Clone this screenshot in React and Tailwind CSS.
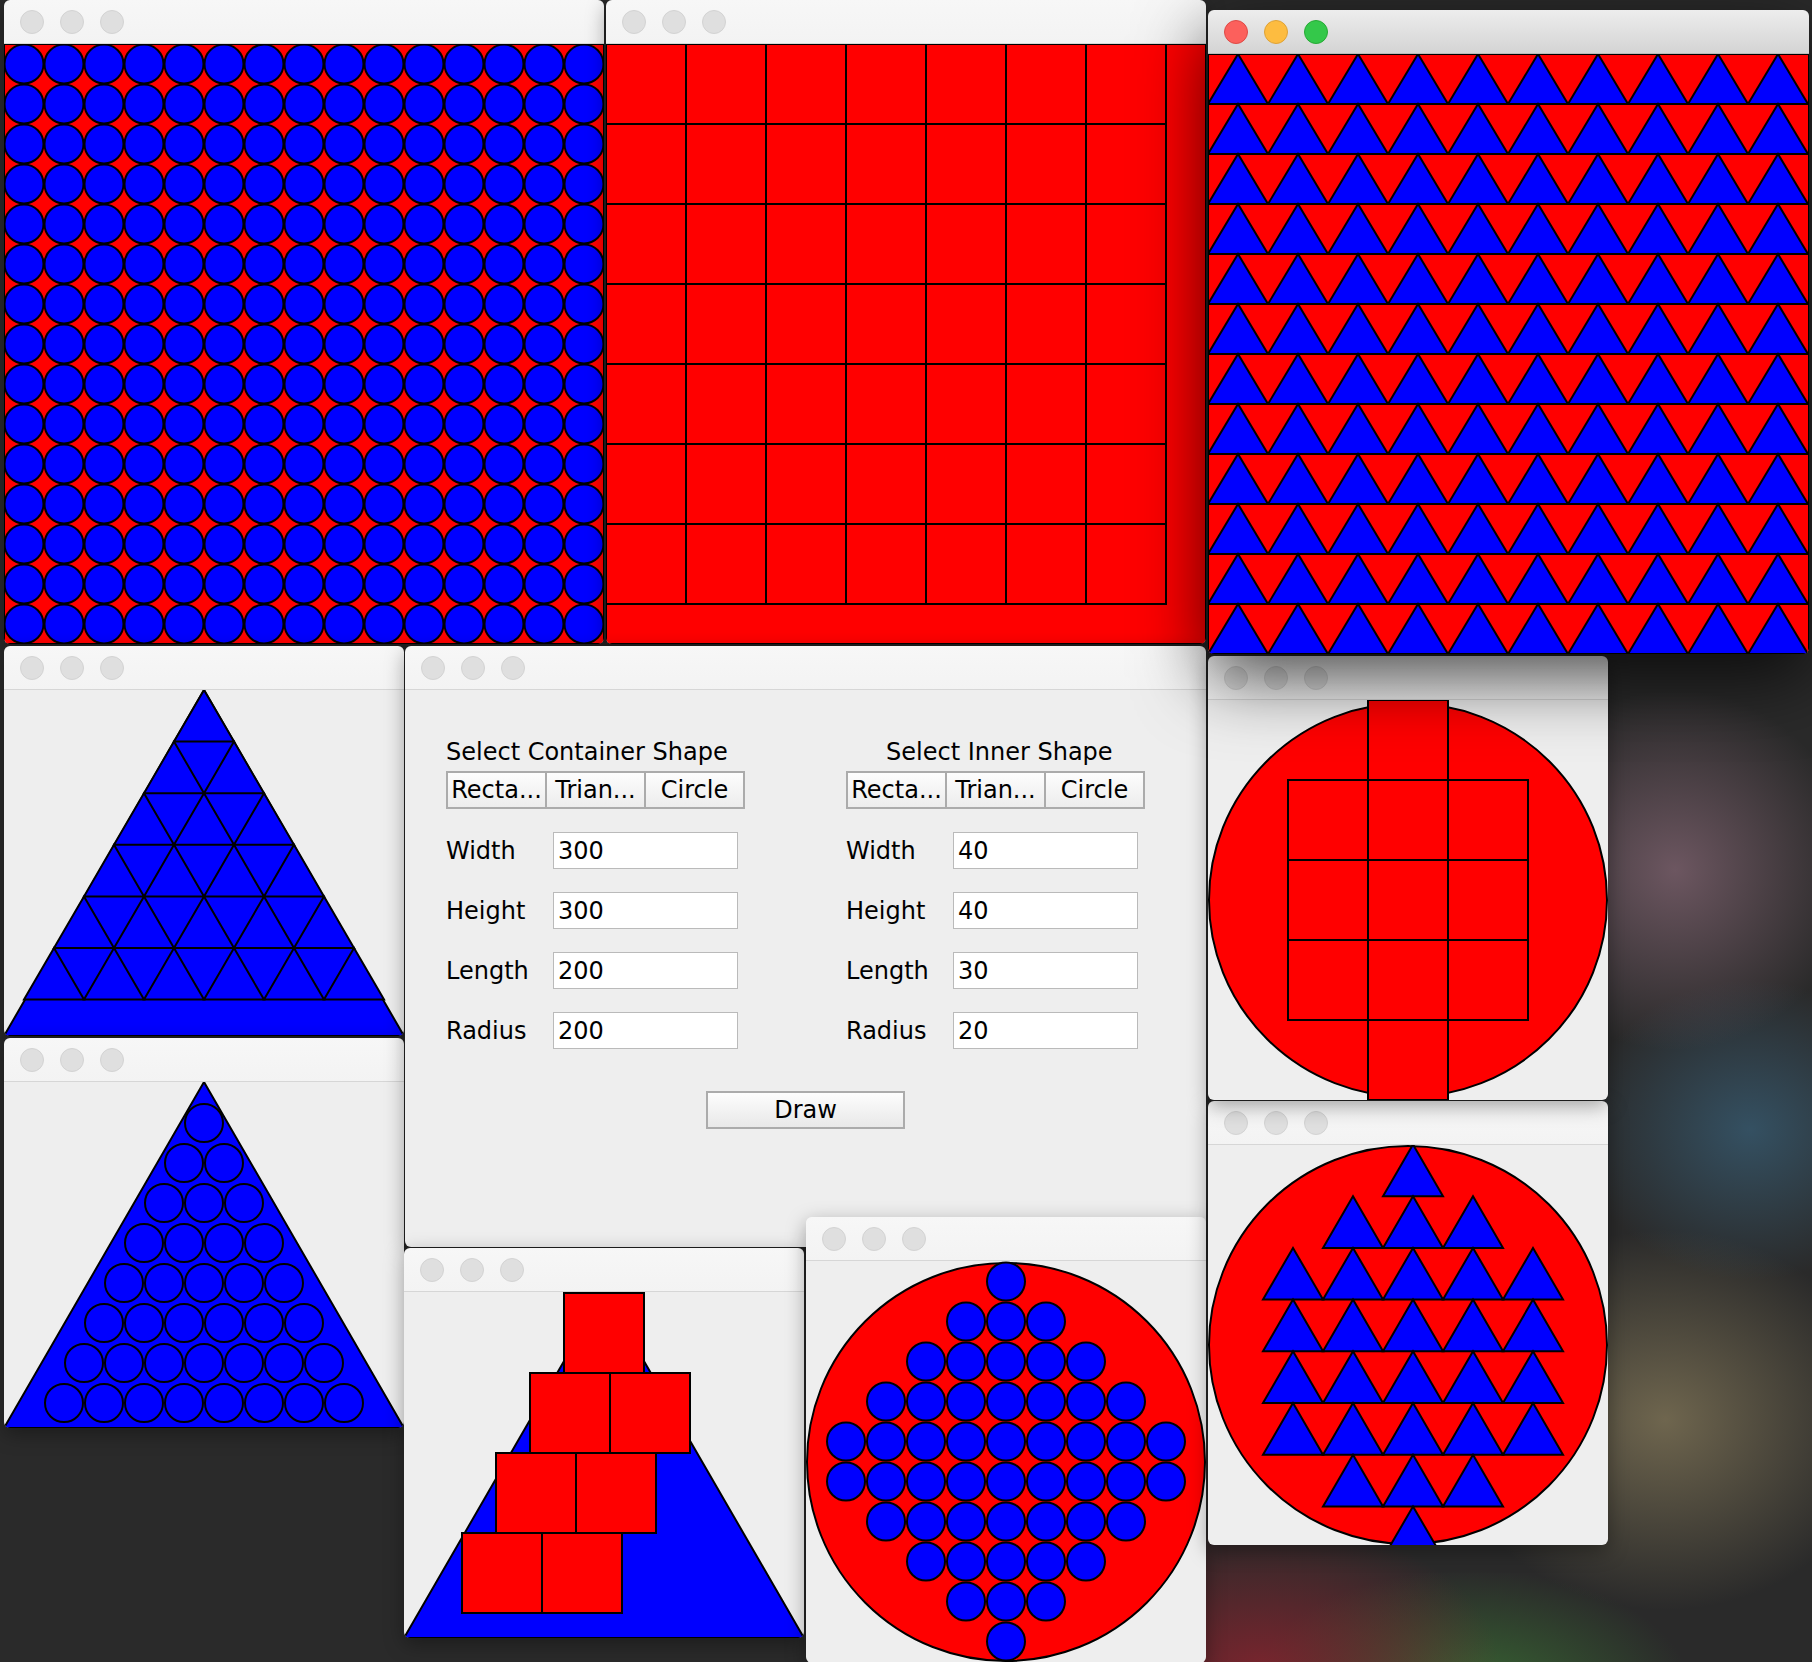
import React from 'react';

const RED = '#ff0000';
const BLUE = '#0000ff';

// traffic lights in the title bar
function Lights({ active }) {
    if (active) {
        return (
            <>
                <span className="h-[24px] w-[24px] rounded-full border border-[#de4a46] bg-[#fc605c]" />
                <span className="h-[24px] w-[24px] rounded-full border border-[#dea236] bg-[#fdbc40]" />
                <span className="h-[24px] w-[24px] rounded-full border border-[#27aa35] bg-[#34c84a]" />
            </>
        );
    }
    return (
        <>
            <span className="h-[24px] w-[24px] rounded-full border border-[#d3d3d3] bg-[#dfdfdf]" />
            <span className="h-[24px] w-[24px] rounded-full border border-[#d3d3d3] bg-[#dfdfdf]" />
            <span className="h-[24px] w-[24px] rounded-full border border-[#d3d3d3] bg-[#dfdfdf]" />
        </>
    );
}

function Window({ className, active, children }) {
    return (
        <div className={`absolute flex flex-col overflow-hidden rounded-[6px] ${active ? 'shadow-[0_24px_70px_rgba(0,0,0,0.7)]' : 'shadow-[0_6px_20px_rgba(0,0,0,0.35)]'} ${className}`}>
            <div className={`flex h-[44px] shrink-0 items-center gap-[16px] border-b pl-[16px] ${active ? 'border-[#b9b9b9] bg-gradient-to-b from-[#ededed] to-[#d4d4d4]' : 'border-[#d6d6d6] bg-gradient-to-b from-[#f7f7f7] to-[#f3f3f3]'}`}>
                <Lights active={active} />
            </div>
            <div className="flex-1 overflow-hidden bg-[#eeeeee]">{children}</div>
        </div>
    );
}

const stroke = { stroke: '#000', strokeWidth: 2 };

function CircleGrid() {
    const items = [];
    for (let i = 0; i < 15; i++)
        for (let j = 0; j < 15; j++)
            items.push(<circle key={`${i}-${j}`} cx={20 + 40 * j} cy={20 + 40 * i} r={19.5} fill={BLUE} {...stroke} />);
    return (
        <svg width="600" height="600" className="block">
            <rect x="0" y="0" width="600" height="600" fill={RED} {...stroke} />
            {items}
        </svg>
    );
}

function RectGrid() {
    const items = [];
    for (let i = 0; i < 7; i++)
        for (let j = 0; j < 7; j++)
            items.push(<rect key={`${i}-${j}`} x={80 * j} y={80 * i} width="80" height="80" fill={RED} {...stroke} />);
    return (
        <svg width="600" height="600" className="block" shapeRendering="crispEdges">
            <rect x="0" y="0" width="600" height="600" fill={RED} {...stroke} />
            {items}
        </svg>
    );
}

function TriangleGrid() {
    const items = [];
    for (let i = 0; i < 12; i++)
        for (let j = 0; j < 10; j++) {
            const x = 60 * j, y = 50 * i;
            items.push(<polygon key={`${i}-${j}`} points={`${x},${y + 50} ${x + 30},${y} ${x + 60},${y + 50}`} fill={BLUE} {...stroke} />);
        }
    return (
        <svg width="601" height="600" className="block">
            <rect x="0" y="0" width="601" height="600" fill={RED} {...stroke} />
            {items}
        </svg>
    );
}

const BIG_TRI = '0,346 200,0 400,346';

function TriInTri() {
    const h = 51.6;
    const items = [];
    for (let k = 0; k < 6; k++)
        for (let j = 0; j <= k; j++) {
            const left = 200 - 30 * (k + 1) + 60 * j;
            items.push(<polygon key={`${k}-${j}`} points={`${left},${h * (k + 1)} ${left + 30},${h * k} ${left + 60},${h * (k + 1)}`} fill={BLUE} {...stroke} />);
        }
    return (
        <svg width="400" height="346" className="block">
            <polygon points={BIG_TRI} fill={BLUE} {...stroke} />
            {items}
        </svg>
    );
}

function CircInTri() {
    const items = [];
    for (let i = 0; i < 8; i++)
        for (let j = 0; j <= i; j++)
            items.push(<circle key={`${i}-${j}`} cx={200 - 20 * i + 40 * j} cy={41 + 40 * i} r={19} fill={BLUE} {...stroke} />);
    return (
        <svg width="400" height="346" className="block">
            <polygon points={BIG_TRI} fill={BLUE} {...stroke} />
            {items}
        </svg>
    );
}

function RectInTri() {
    const rects = [[160, 1], [126, 81], [206, 81], [92, 161], [172, 161], [58, 241], [138, 241]];
    return (
        <svg width="400" height="346" className="block">
            <polygon points={BIG_TRI} fill={BLUE} {...stroke} />
            {rects.map(([x, y]) => (
                <rect key={`${x}-${y}`} x={x} y={y} width="80" height="80" fill={RED} {...stroke} shapeRendering="crispEdges" />
            ))}
        </svg>
    );
}

function CircInCirc() {
    const counts = [0, 1, 2, 3, 4, 4, 3, 2, 1, 0];
    const items = [];
    counts.forEach((n, i) => {
        for (let j = -n; j <= n; j++)
            items.push(<circle key={`${i}-${j}`} cx={200 + 40 * j} cy={20.5 + 40 * i} r={19} fill={BLUE} {...stroke} />);
    });
    return (
        <svg width="400" height="402" className="block">
            <circle cx="200" cy="201" r="199" fill={RED} {...stroke} />
            {items}
        </svg>
    );
}

function RectInCirc() {
    const cells = [[160, 0], [80, 80], [160, 80], [240, 80], [80, 160], [160, 160], [240, 160], [80, 240], [160, 240], [240, 240], [160, 320]];
    return (
        <svg width="400" height="400" className="block">
            <ellipse cx="200" cy="200" rx="199" ry="197" fill={RED} {...stroke} />
            {cells.map(([x, y]) => (
                <rect key={`${x}-${y}`} x={x} y={y} width="80" height="80" fill={RED} {...stroke} shapeRendering="crispEdges" />
            ))}
        </svg>
    );
}

function TriInCirc() {
    const counts = [1, 3, 5, 5, 5, 5, 3, 1];
    const h = 51.7;
    const items = [];
    counts.forEach((n, r) => {
        const top = -0.5 + h * r;
        for (let j = 0; j < n; j++) {
            const left = 205 - 30 * n + 60 * j;
            items.push(<polygon key={`${r}-${j}`} points={`${left},${top + h} ${left + 30},${top} ${left + 60},${top + h}`} fill={BLUE} {...stroke} />);
        }
    });
    return (
        <svg width="400" height="400" className="block">
            <circle cx="200" cy="200" r="199" fill={RED} {...stroke} />
            {items}
        </svg>
    );
}

function Segmented() {
    return (
        <div className="mt-[5px] flex h-[38px] w-[299px] border-2 border-[#ababab] bg-gradient-to-b from-[#fdfdfd] to-[#ececec]">
            {['Recta...', 'Trian...', 'Circle'].map((t, i) => (
                <div key={t} className={`flex flex-1 items-center justify-center overflow-hidden whitespace-nowrap ${i > 0 ? 'border-l-2 border-[#ababab]' : ''}`}>
                    {t}
                </div>
            ))}
        </div>
    );
}

function Column({ title, titleClass, values }) {
    const labels = ['Width', 'Height', 'Length', 'Radius'];
    return (
        <div className="flex w-[299px] flex-col">
            <div className={`h-[28px] whitespace-nowrap leading-[28px] ${titleClass}`}>{title}</div>
            <Segmented />
            <div className="mt-[23px] flex flex-col gap-[23px]">
                {labels.map((l, i) => (
                    <div key={l} className="flex h-[37px] items-center">
                        <span className="w-[107px]">{l}</span>
                        <div className="flex h-[37px] w-[185px] items-center border border-[#bababa] bg-white pl-[4px]">{values[i]}</div>
                    </div>
                ))}
            </div>
        </div>
    );
}

function ShapeForm() {
    return (
        <div className="flex h-full flex-col font-['DejaVu_Sans',sans-serif] text-[24px] text-black">
            <div className="flex gap-[101px] pl-[41px] pt-[48px]">
                <Column title="Select Container Shape" titleClass="" values={['300', '300', '200', '200']} />
                <Column title="Select Inner Shape" titleClass="pl-[40px]" values={['40', '40', '30', '20']} />
            </div>
            <div className="mt-[42px] flex justify-center">
                <button className="h-[38px] w-[199px] border-2 border-[#ababab] bg-gradient-to-b from-[#fdfdfd] to-[#e8e8e8] leading-none">
                    Draw
                </button>
            </div>
        </div>
    );
}

export default function App() {
    return (
        <div className="relative h-[1662px] w-[1812px] overflow-hidden bg-[#2a2a2a] bg-[image:radial-gradient(ellipse_180px_180px_at_1675px_870px,rgba(120,94,106,0.85),transparent),radial-gradient(ellipse_170px_150px_at_1750px_1130px,rgba(55,90,112,0.8),transparent),radial-gradient(ellipse_220px_190px_at_1665px_1420px,rgba(118,108,82,0.9),transparent),radial-gradient(ellipse_240px_150px_at_1260px_1670px,rgba(130,36,46,0.9),transparent),radial-gradient(ellipse_220px_120px_at_1470px_1690px,rgba(58,110,52,0.85),transparent)]">
            <Window className="left-[4px] top-0 z-[1] h-[644px] w-[600px]">
                <CircleGrid />
            </Window>
            <Window className="left-[606px] top-0 z-[2] h-[644px] w-[600px]">
                <RectGrid />
            </Window>
            <Window className="left-[4px] top-[646px] z-[3] h-[390px] w-[400px]">
                <TriInTri />
            </Window>
            <Window className="left-[4px] top-[1038px] z-[4] h-[390px] w-[400px]">
                <CircInTri />
            </Window>
            <Window className="left-[405px] top-[646px] z-[5] h-[601px] w-[801px]">
                <ShapeForm />
            </Window>
            <Window className="left-[404px] top-[1248px] z-[6] h-[390px] w-[400px]">
                <RectInTri />
            </Window>
            <Window className="left-[806px] top-[1217px] z-[7] h-[446px] w-[400px]">
                <CircInCirc />
            </Window>
            <Window className="left-[1208px] top-[1101px] z-[8] h-[444px] w-[400px]">
                <TriInCirc />
            </Window>
            <Window className="left-[1208px] top-[656px] z-[9] h-[444px] w-[400px]">
                <RectInCirc />
            </Window>
            <Window active className="left-[1208px] top-[10px] z-[10] h-[644px] w-[601px]">
                <TriangleGrid />
            </Window>
        </div>
    );
}
